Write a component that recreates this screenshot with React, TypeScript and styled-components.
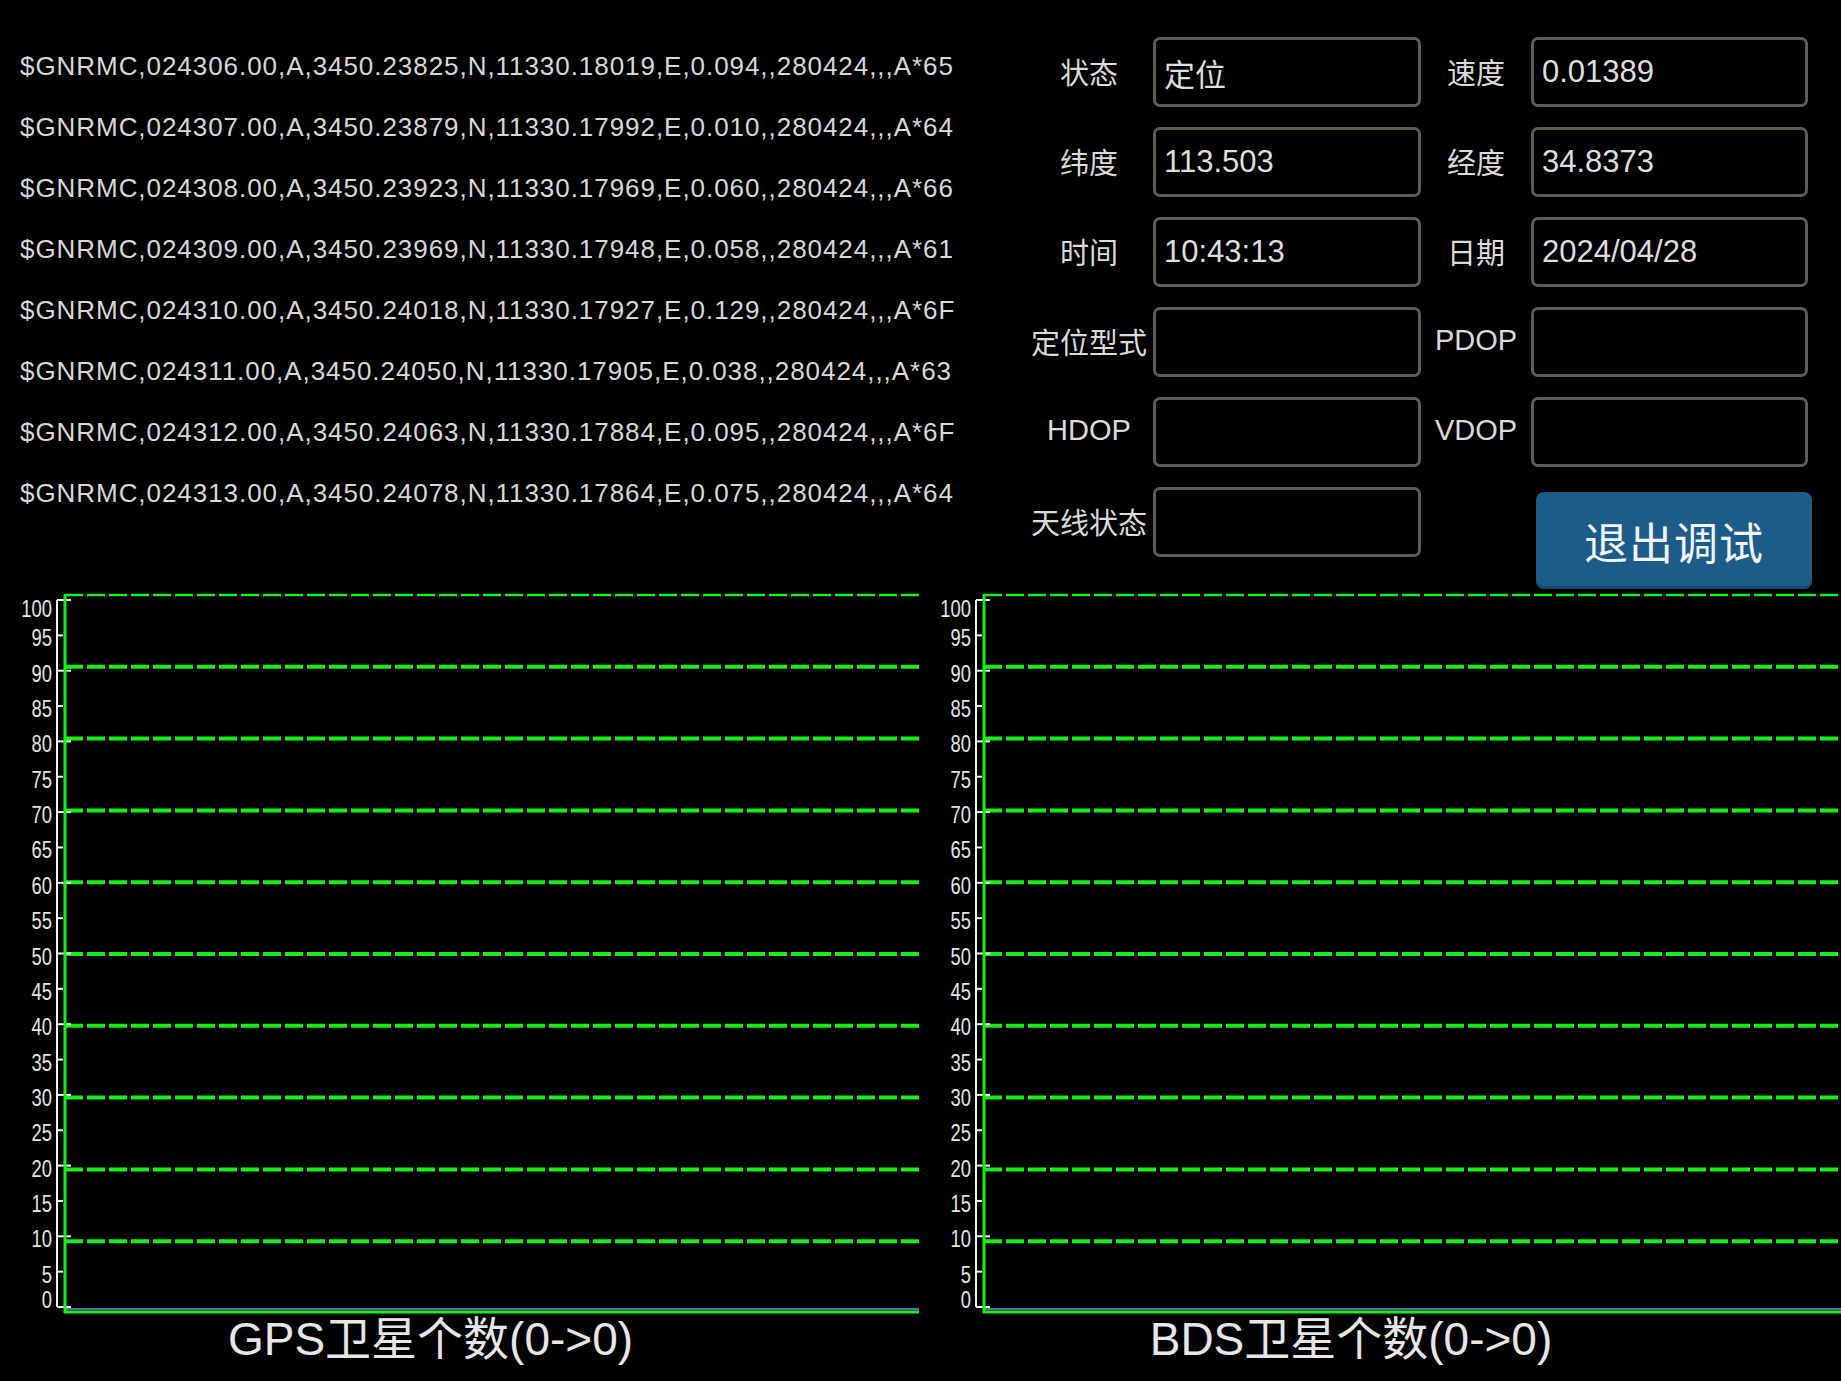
import React, {FC} from 'react';
import styled, {createGlobalStyle} from 'styled-components';

const GlobalStyle = createGlobalStyle`
  html, body {
    margin: 0;
    padding: 0;
    background: #000;
  }

  body {
    font-family: "Liberation Sans", "Noto Sans CJK SC", sans-serif;
  }
`

const logLines = [
    '$GNRMC,024306.00,A,3450.23825,N,11330.18019,E,0.094,,280424,,,A*65',
    '$GNRMC,024307.00,A,3450.23879,N,11330.17992,E,0.010,,280424,,,A*64',
    '$GNRMC,024308.00,A,3450.23923,N,11330.17969,E,0.060,,280424,,,A*66',
    '$GNRMC,024309.00,A,3450.23969,N,11330.17948,E,0.058,,280424,,,A*61',
    '$GNRMC,024310.00,A,3450.24018,N,11330.17927,E,0.129,,280424,,,A*6F',
    '$GNRMC,024311.00,A,3450.24050,N,11330.17905,E,0.038,,280424,,,A*63',
    '$GNRMC,024312.00,A,3450.24063,N,11330.17884,E,0.095,,280424,,,A*6F',
    '$GNRMC,024313.00,A,3450.24078,N,11330.17864,E,0.075,,280424,,,A*64',
]

const fields: [string, string, string, string][] = [
    ['状态', '定位', '速度', '0.01389'],
    ['纬度', '113.503', '经度', '34.8373'],
    ['时间', '10:43:13', '日期', '2024/04/28'],
    ['定位型式', '', 'PDOP', ''],
    ['HDOP', '', 'VDOP', ''],
]

// chart geometry (svg px)
const AXIS_X = 57
const GREEN_X = 65
const greenY = (v: number) => 7 + 7.18 * (100 - v)
const whiteY = (v: number) => 12 + 7.07 * (100 - v)
const ticks = Array.from({length: 21}, (_, i) => 100 - i * 5)
const gridLevels = [100, 90, 80, 70, 60, 50, 40, 30, 20, 10]

// labels at both ends are pushed inward so they stay inside the plot
const labelOffset = (v: number) => v === 100 ? 17 : v === 0 ? 1 : 11

const Chart: FC<{ title: string, grow?: boolean }> = ({title, grow}) => {
    return <ChartPanel $grow={grow}>
        <svg width="100%" height="728">
            {gridLevels.map(v =>
                <line key={v} x1={GREEN_X} x2="100%" y1={greenY(v)} y2={greenY(v)}
                      stroke="#16f016" strokeWidth={v === 100 ? 2.5 : 4} strokeDasharray="18 4"/>
            )}
            <line x1={GREEN_X} x2="100%" y1={721} y2={721} stroke="#5b6cae" strokeWidth={2}/>
            <line x1={GREEN_X - 1} x2="100%" y1={724} y2={724} stroke="#16f016" strokeWidth={3}/>
            <line x1={AXIS_X} x2={AXIS_X} y1={whiteY(100)} y2={whiteY(0)} stroke="#f2f2f2" strokeWidth={2}/>
            {ticks.map(v => {
                const y = whiteY(v)
                const len = v % 10 === 0 ? 14 : 6
                return <g key={v}>
                    <line x1={AXIS_X} x2={AXIS_X + len} y1={y} y2={y} stroke="#f2f2f2" strokeWidth={2}/>
                    <text transform={`translate(${AXIS_X - 5} ${y + labelOffset(v)}) scale(0.8 1)`}
                          textAnchor="end" fontSize={23} fill="#e4e4e4"
                          fontFamily="Liberation Sans, sans-serif">{v}</text>
                </g>
            })}
            <line x1={GREEN_X} x2={GREEN_X} y1={6} y2={725} stroke="#16f016" strokeWidth={3}/>
        </svg>
        <ChartCaption>{title}</ChartCaption>
    </ChartPanel>
}

const App: FC = () => {
    return <Page>
        <GlobalStyle/>
        <TopSection>
            <LogList>
                {logLines.map((l, i) => <LogLine key={i}>{l}</LogLine>)}
            </LogList>
            <InfoGrid>
                {fields.map(([l1, v1, l2, v2]) => <React.Fragment key={l1}>
                    <FieldLabel>{l1}</FieldLabel>
                    <ValueBox>{v1}</ValueBox>
                    <FieldLabel>{l2}</FieldLabel>
                    <ValueBox>{v2}</ValueBox>
                </React.Fragment>)}
                <FieldLabel>天线状态</FieldLabel>
                <ValueBox/>
                <span/>
                <ExitButton>退出调试</ExitButton>
            </InfoGrid>
        </TopSection>
        <ChartsRow>
            <Chart title="GPS卫星个数(0->0)"/>
            <Chart title="BDS卫星个数(0->0)" grow/>
        </ChartsRow>
    </Page>
}
export default App;

const Page = styled.div`
  width: 1841px;
  height: 1381px;
  background: #000;
  overflow: hidden;
  color: #e0e0e0;
`

const TopSection = styled.div`
  display: flex;
  height: 588px;
`

const LogList = styled.div`
  width: 1028px;
  box-sizing: border-box;
  padding: 36px 0 0 20px;
  flex-shrink: 0;
`

const LogLine = styled.div`
  font-size: 26px;
  line-height: 61px;
  letter-spacing: 0.95px;
  color: #d8d8d8;
  white-space: nowrap;
`

const InfoGrid = styled.div`
  display: grid;
  grid-template-columns: 122px 268px 104px 277px;
  grid-auto-rows: 70px;
  column-gap: 3px;
  row-gap: 20px;
  padding-top: 37px;
  align-content: start;
`

const FieldLabel = styled.div`
  display: flex;
  align-items: center;
  justify-content: center;
  padding-bottom: 3px;
  font-size: 29px;
  color: #dadada;
  white-space: nowrap;
`

const ValueBox = styled.div`
  box-sizing: border-box;
  border: 3px solid #5e5e4e;
  border-radius: 7px;
  display: flex;
  align-items: center;
  padding-left: 8px;
  font-size: 31px;
  color: #dedede;
`

const ExitButton = styled.div`
  align-self: start;
  margin: 5px 0 0 5px;
  width: 276px;
  height: 97px;
  border-radius: 8px;
  background: #1d5c88;
  box-shadow: inset 0 -3px 0 #17496c;
  display: flex;
  align-items: center;
  justify-content: center;
  font-size: 44px;
  color: #eef3f7;
  letter-spacing: 1px;
`

const ChartsRow = styled.div`
  display: flex;
`

const ChartPanel = styled.div<{ $grow?: boolean }>`
  display: flex;
  flex-direction: column;
  flex: ${p => p.$grow ? '1' : '0 0 919px'};

  svg {
    display: block;
  }
`

const ChartCaption = styled.div`
  text-align: center;
  padding-right: 58px;
  font-size: 46px;
  line-height: 46px;
  color: #e6e6e6;
  white-space: nowrap;
`
